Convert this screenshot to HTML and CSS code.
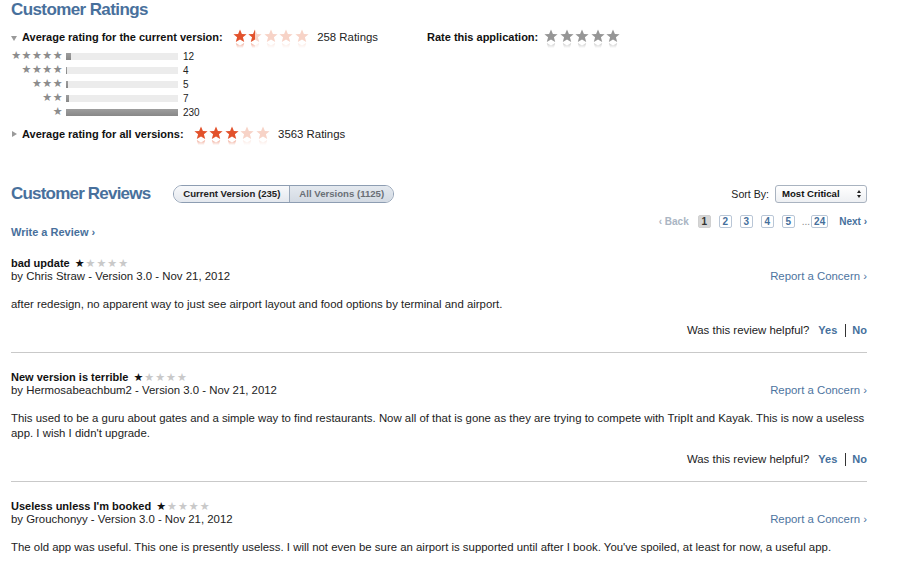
FILE: index.html
```html
<!DOCTYPE html>
<html>
<head>
<meta charset="utf-8">
<link rel="stylesheet" href="styles.css">
</head>
<body>
<svg width="0" height="0" class="defs">
  <defs>
    <linearGradient id="refl" x1="0" y1="0" x2="0" y2="1">
      <stop offset="0" stop-color="#fff" stop-opacity="0.45"/>
      <stop offset="0.4" stop-color="#fff" stop-opacity="1"/>
      <stop offset="1" stop-color="#fff" stop-opacity="1"/>
    </linearGradient>
    <symbol id="star" viewBox="0 0 14 14">
      <path d="M7 0.5 L8.9 5 L13.6 5.2 L9.9 8.2 L11.2 13 L7 10.4 L2.8 13 L4.1 8.2 L0.4 5.2 L5.1 5 Z"/>
    </symbol>
    <symbol id="halfstar" viewBox="0 0 14 14">
      <path d="M7 0.5 L7 10.4 L2.8 13 L4.1 8.2 L0.4 5.2 L5.1 5 Z"/>
    </symbol>
  </defs>
</svg>

<div class="page">
  <h1 class="heading">Customer Ratings</h1>

  <div class="rate-row">
    <div class="avg">
      <span class="tri down"></span>
      <span class="label">Average rating for the current version:</span>
      <span class="bigstars">
        <svg class="bs" viewBox="0 0 14 14"><g class="on"><use href="#star"/></g><g class="mirror on"><use href="#star"/></g><rect x="-1" y="13.5" width="16" height="14" fill="url(#refl)"/></svg>
        <svg class="bs" viewBox="0 0 14 14"><g class="off"><use href="#star"/></g><g class="on"><use href="#halfstar"/></g><g class="mirror off"><use href="#star"/></g><g class="mirror on"><use href="#halfstar"/></g><rect x="-1" y="13.5" width="16" height="14" fill="url(#refl)"/></svg>
        <svg class="bs" viewBox="0 0 14 14"><g class="off"><use href="#star"/></g><g class="mirror off"><use href="#star"/></g><rect x="-1" y="13.5" width="16" height="14" fill="url(#refl)"/></svg>
        <svg class="bs" viewBox="0 0 14 14"><g class="off"><use href="#star"/></g><g class="mirror off"><use href="#star"/></g><rect x="-1" y="13.5" width="16" height="14" fill="url(#refl)"/></svg>
        <svg class="bs" viewBox="0 0 14 14"><g class="off"><use href="#star"/></g><g class="mirror off"><use href="#star"/></g><rect x="-1" y="13.5" width="16" height="14" fill="url(#refl)"/></svg>
      </span>
      <span class="count">258 Ratings</span>
    </div>
    <div class="rate-app">
      <span class="label">Rate this application:</span>
      <span class="bigstars">
        <svg class="bs" viewBox="0 0 14 14"><g class="grey"><use href="#star"/></g><g class="mirror grey"><use href="#star"/></g><rect x="-1" y="13.5" width="16" height="14" fill="url(#refl)"/></svg>
        <svg class="bs" viewBox="0 0 14 14"><g class="grey"><use href="#star"/></g><g class="mirror grey"><use href="#star"/></g><rect x="-1" y="13.5" width="16" height="14" fill="url(#refl)"/></svg>
        <svg class="bs" viewBox="0 0 14 14"><g class="grey"><use href="#star"/></g><g class="mirror grey"><use href="#star"/></g><rect x="-1" y="13.5" width="16" height="14" fill="url(#refl)"/></svg>
        <svg class="bs" viewBox="0 0 14 14"><g class="grey"><use href="#star"/></g><g class="mirror grey"><use href="#star"/></g><rect x="-1" y="13.5" width="16" height="14" fill="url(#refl)"/></svg>
        <svg class="bs" viewBox="0 0 14 14"><g class="grey"><use href="#star"/></g><g class="mirror grey"><use href="#star"/></g><rect x="-1" y="13.5" width="16" height="14" fill="url(#refl)"/></svg>
      </span>
    </div>
  </div>

  <div class="bars">
    <div class="bar-row"><span class="bar-stars">★★★★★</span><span class="bar"><span class="fill" style="width:5px"></span></span><span class="bar-count">12</span></div>
    <div class="bar-row"><span class="bar-stars">★★★★</span><span class="bar"><span class="fill" style="width:1px"></span></span><span class="bar-count">4</span></div>
    <div class="bar-row"><span class="bar-stars">★★★</span><span class="bar"><span class="fill" style="width:2px"></span></span><span class="bar-count">5</span></div>
    <div class="bar-row"><span class="bar-stars">★★</span><span class="bar"><span class="fill" style="width:3px"></span></span><span class="bar-count">7</span></div>
    <div class="bar-row"><span class="bar-stars">★</span><span class="bar"><span class="fill" style="width:112px"></span></span><span class="bar-count">230</span></div>
  </div>

  <div class="avg avg-all">
    <span class="tri right"></span>
    <span class="label">Average rating for all versions:</span>
    <span class="bigstars">
      <svg class="bs" viewBox="0 0 14 14"><g class="on"><use href="#star"/></g><g class="mirror on"><use href="#star"/></g><rect x="-1" y="13.5" width="16" height="14" fill="url(#refl)"/></svg>
      <svg class="bs" viewBox="0 0 14 14"><g class="on"><use href="#star"/></g><g class="mirror on"><use href="#star"/></g><rect x="-1" y="13.5" width="16" height="14" fill="url(#refl)"/></svg>
      <svg class="bs" viewBox="0 0 14 14"><g class="on"><use href="#star"/></g><g class="mirror on"><use href="#star"/></g><rect x="-1" y="13.5" width="16" height="14" fill="url(#refl)"/></svg>
      <svg class="bs" viewBox="0 0 14 14"><g class="off"><use href="#star"/></g><g class="mirror off"><use href="#star"/></g><rect x="-1" y="13.5" width="16" height="14" fill="url(#refl)"/></svg>
      <svg class="bs" viewBox="0 0 14 14"><g class="off"><use href="#star"/></g><g class="mirror off"><use href="#star"/></g><rect x="-1" y="13.5" width="16" height="14" fill="url(#refl)"/></svg>
    </span>
    <span class="count">3563 Ratings</span>
  </div>

  <div class="reviews-head">
    <div class="reviews-left">
      <h1 class="heading rev">Customer Reviews</h1>
      <div class="seg">
        <span class="seg-item active">Current Version (235)</span>
        <span class="seg-item">All Versions (1125)</span>
      </div>
    </div>
    <div class="sort">
      <span class="sort-label">Sort By:</span>
      <span class="select">Most Critical<span class="arrows"><span class="up"></span><span class="dn"></span></span></span>
    </div>
  </div>

  <div class="subbar">
    <a class="write">Write a Review ›</a>
    <div class="pager">
      <span class="back">‹ Back</span>
      <span class="pg cur">1</span>
      <span class="pg">2</span>
      <span class="pg">3</span>
      <span class="pg">4</span>
      <span class="pg">5</span>
      <span class="dots">...</span>
      <span class="pg">24</span>
      <span class="next">Next ›</span>
    </div>
  </div>

  <div class="review">
    <div class="review-head">
      <div>
        <div class="review-title">bad update <span class="rstars">★<span class="roff">★★★★</span></span></div>
        <div class="review-by">by Chris Straw - Version 3.0 - Nov 21, 2012</div>
      </div>
      <a class="concern">Report a Concern ›</a>
    </div>
    <p class="review-body">after redesign, no apparent way to just see airport layout and food options by terminal and airport.</p>
    <div class="helpful">Was this review helpful? <a class="yn">Yes</a><span class="sep"></span><a class="yn">No</a></div>
  </div>

  <div class="review">
    <div class="review-head">
      <div>
        <div class="review-title">New version is terrible <span class="rstars">★<span class="roff">★★★★</span></span></div>
        <div class="review-by">by Hermosabeachbum2 - Version 3.0 - Nov 21, 2012</div>
      </div>
      <a class="concern">Report a Concern ›</a>
    </div>
    <p class="review-body">This used to be a guru about gates and a simple way to find restaurants. Now all of that is gone as they are trying to compete with TripIt and Kayak. This is now a useless app. I wish I didn't upgrade.</p>
    <div class="helpful">Was this review helpful? <a class="yn">Yes</a><span class="sep"></span><a class="yn">No</a></div>
  </div>

  <div class="review last">
    <div class="review-head">
      <div>
        <div class="review-title">Useless unless I'm booked <span class="rstars">★<span class="roff">★★★★</span></span></div>
        <div class="review-by">by Grouchonyy - Version 3.0 - Nov 21, 2012</div>
      </div>
      <a class="concern">Report a Concern ›</a>
    </div>
    <p class="review-body">The old app was useful. This one is presently useless. I will not even be sure an airport is supported until after I book. You've spoiled, at least for now, a useful app.</p>
  </div>
</div>
</body>
</html>
```

FILE: styles.css
```css
html, body {
  margin: 0;
  padding: 0;
  background: #fff;
}
body {
  font-family: "Liberation Sans", Helvetica, Arial, sans-serif;
  font-size: 11.4px;
  color: #222;
  overflow: hidden;
}
.defs {
  position: absolute;
  width: 0;
  height: 0;
}
.page {
  width: 856px;
  padding-left: 11px;
}
.heading {
  margin: 0;
  font-size: 17px;
  line-height: 20px;
  font-weight: bold;
  letter-spacing: -0.6px;
  color: #48709c;
}
.heading.rev {
  letter-spacing: -0.8px;
}

/* rating rows */
.rate-row {
  display: flex;
  margin-top: 10px;
  height: 14px;
}
.avg {
  display: flex;
  align-items: center;
  height: 14px;
}
.rate-row .avg {
  width: 416px;
}
.tri {
  width: 0;
  height: 0;
  margin-right: 5px;
}
.tri.down {
  border-left: 3px solid transparent;
  border-right: 3px solid transparent;
  border-top: 5px solid #9a9a9a;
  margin-top: 2px;
}
.tri.right {
  border-top: 3px solid transparent;
  border-bottom: 3px solid transparent;
  border-left: 5px solid #9a9a9a;
  margin-left: 1px;
}
.label {
  font-weight: bold;
  font-size: 11px;
  color: #111;
}
.bigstars {
  display: flex;
  margin-left: 8px;
  margin-right: 7px;
  margin-bottom: 3px;
}
.rate-row .avg .bigstars {
  margin-left: 10px;
}
.avg-all .bigstars {
  margin-left: 10px;
}
.bs {
  width: 14px;
  height: 14px;
  margin-right: 1.5px;
  overflow: visible;
}
.on { fill: #e2522c; }
.off { fill: #f7d3c7; }
.grey { fill: #969696; }
.mirror {
  transform: translateY(27px) scaleY(-1);
}
.count {
  color: #222;
}
.rate-app {
  display: flex;
  align-items: center;
  height: 14px;
}
.rate-app .bigstars {
  margin-left: 6px;
}

/* bars */
.bars {
  margin-top: 5px;
}
.bar-row {
  display: flex;
  align-items: center;
  height: 14px;
}
.bar-stars {
  width: 52px;
  text-align: right;
  font-family: "DejaVu Sans", sans-serif;
  font-size: 11px;
  letter-spacing: 0.5px;
  color: #8c8c8c;
  line-height: 14px;
}
.bar {
  display: block;
  width: 112px;
  height: 7px;
  margin-left: 3px;
  background: #ececec;
}
.fill {
  display: block;
  height: 7px;
  background: linear-gradient(#9e9e9e, #888);
}
.bar-count {
  margin-left: 5px;
  font-size: 10px;
  color: #222;
}
.avg-all {
  margin-top: 8px;
}

/* reviews header */
.reviews-head {
  display: flex;
  justify-content: space-between;
  align-items: center;
  margin-top: 43px;
}
.reviews-left {
  display: flex;
  align-items: center;
}
.seg {
  display: flex;
  margin-left: 23px;
  height: 16px;
  border: 1px solid #8d9db2;
  border-radius: 9px;
  overflow: hidden;
  font-size: 9.6px;
  font-weight: bold;
  line-height: 16px;
}
.seg-item {
  padding: 0 9px;
  color: #6a6f76;
  background: linear-gradient(#e4e9ef, #d3dae3);
}
.seg-item.active {
  color: #222;
  padding-left: 9px;
  background: linear-gradient(#f8f9fb, #e4e8ee);
  border-right: 1px solid #9aa8ba;
}
.sort {
  display: flex;
  align-items: center;
}
.sort-label {
  color: #222;
  font-size: 10.6px;
  margin-right: 6px;
}
.select {
  position: relative;
  width: 84px;
  height: 16px;
  line-height: 16px;
  padding-left: 6px;
  border: 1px solid #a9b3c0;
  border-radius: 3px;
  background: linear-gradient(#fff, #eef0f3);
  font-size: 9.6px;
  font-weight: bold;
  color: #111;
}
.arrows {
  position: absolute;
  right: 5px;
  top: 4px;
  display: flex;
  flex-direction: column;
  gap: 2px;
}
.up {
  border-left: 2.5px solid transparent;
  border-right: 2.5px solid transparent;
  border-bottom: 3px solid #222;
}
.dn {
  border-left: 2.5px solid transparent;
  border-right: 2.5px solid transparent;
  border-top: 3px solid #222;
}

/* sub bar */
.subbar {
  display: flex;
  justify-content: space-between;
  height: 26px;
  margin-top: 9px;
}
.write {
  align-self: flex-end;
  font-weight: bold;
  font-size: 11px;
  color: #48709c;
  line-height: 14px;
}
.pager {
  display: flex;
  align-items: center;
  height: 14px;
  margin-top: 1px;
  font-size: 10px;
  font-weight: bold;
}
.back {
  color: #aab5c3;
  margin-right: 9px;
}
.pg {
  box-sizing: border-box;
  min-width: 13px;
  height: 13px;
  line-height: 11px;
  padding: 0 2px;
  text-align: center;
  border: 1px solid #b9c6d6;
  border-radius: 2px;
  color: #46709c;
  margin-right: 8px;
}
.pg.cur {
  background: #d6d6d6;
  border-color: #d0d0d0;
  color: #333;
}
.dots {
  color: #888;
  font-weight: normal;
  margin-right: 1px;
  margin-left: -1px;
}
.next {
  color: #46709c;
  margin-left: 3px;
}

/* reviews */
.review {
  padding-top: 18px;
  border-bottom: 1px solid #c9c9c9;
  padding-bottom: 14px;
}
.review:first-of-type {
  padding-top: 19px;
}
.review.last {
  border-bottom: none;
}
.review-head {
  display: flex;
  justify-content: space-between;
  align-items: flex-end;
}
.review-title {
  font-weight: bold;
  font-size: 11px;
  color: #111;
  line-height: 13px;
}
.rstars {
  font-family: "DejaVu Sans", sans-serif;
  font-size: 11px;
  letter-spacing: 1px;
  font-weight: normal;
  color: #111;
  margin-left: 2px;
}
.roff {
  color: #c9c9c9;
}
.review-by {
  line-height: 13px;
  color: #222;
}
.concern {
  color: #4d74a0;
  line-height: 13px;
}
.review-body {
  margin: 14px 0 0;
  line-height: 15px;
  color: #222;
}
.helpful {
  margin-top: 11px;
  line-height: 15px;
  display: flex;
  justify-content: flex-end;
  align-items: center;
  color: #222;
}
.yn {
  font-weight: bold;
  font-size: 11px;
  color: #46709c;
}
.helpful .yn:first-of-type {
  margin-left: 9px;
}
.sep {
  display: inline-block;
  width: 1px;
  height: 13px;
  background: #333;
  margin: 0 6px 0 8px;
}
```
